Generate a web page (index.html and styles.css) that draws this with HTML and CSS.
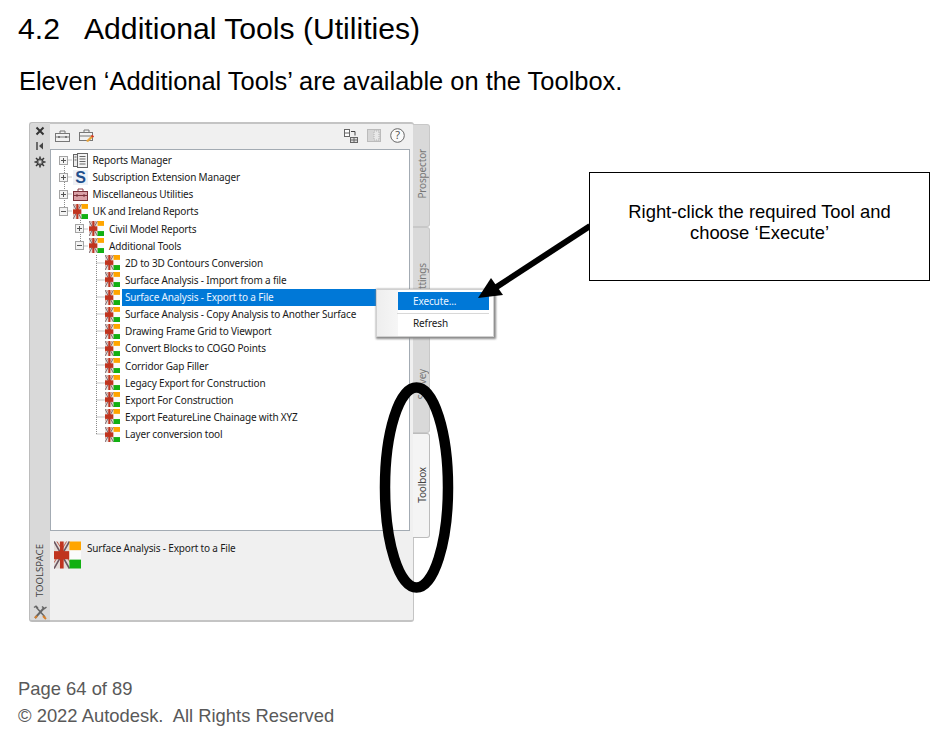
FILE: index.html
```html
<!DOCTYPE html>
<html lang="en">
<head>
<meta charset="utf-8">
<title>Additional Tools (Utilities)</title>
<link rel="stylesheet" href="styles.css">
</head>
<body>
<svg class="defs" width="0" height="0" aria-hidden="true">
  <symbol id="flag" viewBox="0 0 14 14">
    <rect width="8" height="14" fill="#e4dcd8"/>
    <path d="M0 0l8 14M8 0L0 14" stroke="#6a5560" stroke-width=".8"/>
    <path d="M1.500 0l7 11M6.500 0L0 11" stroke="#c0584a" stroke-width=".5"/>
    <rect y="5" width="8" height="4.200" fill="#c0341f"/>
    <rect x="3.100" width="1.900" height="14" fill="#c0341f"/>
    <rect x="8" width="6" height="4.600" fill="#ffa500"/>
    <rect x="8" y="4.600" width="6" height="4.800" fill="#fbfbfb"/>
    <rect x="8" y="9.400" width="6" height="4.600" fill="#12b012"/>
  </symbol>
  <symbol id="plus" viewBox="0 0 9 9">
    <rect x=".5" y=".5" width="8" height="8" fill="#f4f4f4" stroke="#a4a4a4"/>
    <path d="M2 4.500h5M4.500 2v5" stroke="#555"/>
  </symbol>
  <symbol id="minus" viewBox="0 0 9 9">
    <rect x=".5" y=".5" width="8" height="8" fill="#f4f4f4" stroke="#a4a4a4"/>
    <path d="M2 4.500h5" stroke="#555"/>
  </symbol>
</svg>

<main class="page">
  <h1 class="title"><span class="num">4.2</span>Additional Tools (Utilities)</h1>
  <p class="lead">Eleven ‘Additional Tools’ are available on the Toolbox.</p>

  <figure class="figure">
    <div class="panel">
      <div class="strip">
        <svg class="strip-icon" width="10" height="10" viewBox="0 0 10 10"><path d="M1.500 1.500l7 7M8.500 1.500l-7 7" stroke="#333" stroke-width="2"/></svg>
        <svg class="strip-icon" width="10" height="10" viewBox="0 0 10 10"><path d="M2 1v8" stroke="#444" stroke-width="1.500"/><path d="M4 5l4-3.500v7z" fill="#444"/></svg>
        <svg class="strip-icon" width="12" height="12" viewBox="0 0 12 12"><path d="M6 .5v11M.5 6h11M2 2l8 8M10 2l-8 8" stroke="#333" stroke-width="1.500"/><circle cx="6" cy="6" r="3.200" fill="#777" stroke="#333"/><circle cx="6" cy="6" r="1.400" fill="#d9d9d9"/></svg>
        <span class="toolspace">TOOLSPACE</span>
        <svg class="strip-tools" width="15" height="15" viewBox="0 0 15 15"><path d="M2 13L11 3" stroke="#666" stroke-width="2"/><path d="M9 1.500l2.500 2 2-1.500" fill="none" stroke="#666" stroke-width="1.500"/><path d="M3 2l9 10" stroke="#666" stroke-width="1.500"/><path d="M1 2.500L3 1l2 2" fill="none" stroke="#666" stroke-width="1.300"/><path d="M10 11l3 3" stroke="#d8802a" stroke-width="2"/><path d="M2 13l2-2" stroke="#d8802a" stroke-width="2"/></svg>
      </div>

      <div class="main">
        <div class="toolbar">
          <svg class="tool" width="15" height="14" viewBox="0 0 15 14"><path d="M5 4V2h5v2" fill="none" stroke="#777"/><rect x=".5" y="4.500" width="14" height="8" fill="#f2f2f2" stroke="#777"/><path d="M.5 8h14" stroke="#777"/><rect x="3" y="7" width="2" height="2" fill="#777"/><rect x="10" y="7" width="2" height="2" fill="#777"/></svg>
          <svg class="tool" width="15" height="15" viewBox="0 0 15 15"><path d="M5 4V2h5v2" fill="none" stroke="#777"/><rect x=".5" y="4.500" width="13" height="8" fill="#f2f2f2" stroke="#777"/><path d="M.5 8h13" stroke="#777"/><path d="M7 13l6-6 2 1.500-6 5.500z" fill="#e8a33a"/><path d="M12.500 7.500l2 1.500" stroke="#d0342c" stroke-width="2"/></svg>
          <span class="tool-gap"></span>
          <svg class="tool" width="14" height="14" viewBox="0 0 14 14"><rect x=".5" y=".5" width="5" height="7" fill="#fff" stroke="#666"/><path d="M.5 4h5" stroke="#666"/><rect x="6.500" y="8.500" width="7" height="5" fill="#ddd" stroke="#666"/><path d="M10 8.500v5M6.500 11h7" stroke="#666"/><path d="M7 2.500h4v4" fill="none" stroke="#444"/></svg>
          <svg class="tool" width="14" height="14" viewBox="0 0 14 14"><rect x=".5" y=".5" width="13" height="12" fill="#d6d6d6" stroke="#bbb"/><rect x="7" y="2" width="5" height="9" fill="#e8e8e8" stroke="#b4b4b4" stroke-dasharray="1 1"/></svg>
          <svg class="tool" width="15" height="15" viewBox="0 0 15 15"><circle cx="7.500" cy="7.500" r="6.800" fill="#fafafa" stroke="#666"/><text class="help" x="7.500" y="11.300" text-anchor="middle">?</text></svg>
        </div>

        <div class="tree">
          <svg class="tree-lines" width="120" height="300" viewBox="0 0 120 300" aria-hidden="true">
            <path d="M13.500 10v52M13.500 10h8M13.500 27h8M13.500 44h8M13.500 61h8M29.500 62v34M29.500 79h8M29.500 96h8M45.500 105v180M45.500 113h9M45.500 130h9M45.500 147h9M45.500 164h9M45.500 181h9M45.500 198h9M45.500 215h9M45.500 233h9M45.500 250h9M45.500 267h9M45.500 284h9" fill="none" stroke="#8a8a8a" stroke-dasharray="1 1"/>
          </svg>
          <div class="row l0"><svg class="exp"><use href="#plus"/></svg><svg class="ico" viewBox="0 0 15 15"><rect x=".5" y="1.500" width="4" height="12" fill="#ececec" stroke="#666"/><rect x="4.500" y=".5" width="10" height="14" fill="#f4f4f4" stroke="#666"/><path d="M6.500 3.500h6M6.500 6h6M6.500 8.500h6M6.500 11h6M1.500 4h2M1.500 7h2" stroke="#666"/></svg><span class="label">Reports Manager</span></div>
          <div class="row l0"><svg class="exp"><use href="#plus"/></svg><span class="ico s-ico">S</span><span class="label">Subscription Extension Manager</span></div>
          <div class="row l0"><svg class="exp"><use href="#plus"/></svg><svg class="ico" viewBox="0 0 15 15"><path d="M5 4V2h5v2" fill="none" stroke="#8a3a44"/><rect x=".5" y="4.500" width="14" height="9" fill="#d9a0a6" stroke="#7a3038"/><path d="M.5 8.500h14" stroke="#7a3038"/><rect x="3" y="7.500" width="2" height="2" fill="#7a3038"/><rect x="10" y="7.500" width="2" height="2" fill="#7a3038"/></svg><span class="label">Miscellaneous Utilities</span></div>
          <div class="row l0"><svg class="exp"><use href="#minus"/></svg><svg class="ico"><use href="#flag"/></svg><span class="label">UK and Ireland Reports</span></div>
          <div class="row l1"><svg class="exp"><use href="#plus"/></svg><svg class="ico"><use href="#flag"/></svg><span class="label">Civil Model Reports</span></div>
          <div class="row l1"><svg class="exp"><use href="#minus"/></svg><svg class="ico"><use href="#flag"/></svg><span class="label">Additional Tools</span></div>
          <div class="row l2"><svg class="ico"><use href="#flag"/></svg><span class="label">2D to 3D Contours Conversion</span></div>
          <div class="row l2"><svg class="ico"><use href="#flag"/></svg><span class="label">Surface Analysis - Import from a file</span></div>
          <div class="row l2"><svg class="ico"><use href="#flag"/></svg><span class="label selected">Surface Analysis - Export to a File</span></div>
          <div class="row l2"><svg class="ico"><use href="#flag"/></svg><span class="label">Surface Analysis - Copy Analysis to Another Surface</span></div>
          <div class="row l2"><svg class="ico"><use href="#flag"/></svg><span class="label">Drawing Frame Grid to Viewport</span></div>
          <div class="row l2"><svg class="ico"><use href="#flag"/></svg><span class="label">Convert Blocks to COGO Points</span></div>
          <div class="row l2"><svg class="ico"><use href="#flag"/></svg><span class="label">Corridor Gap Filler</span></div>
          <div class="row l2"><svg class="ico"><use href="#flag"/></svg><span class="label">Legacy Export for Construction</span></div>
          <div class="row l2"><svg class="ico"><use href="#flag"/></svg><span class="label">Export For Construction</span></div>
          <div class="row l2"><svg class="ico"><use href="#flag"/></svg><span class="label">Export FeatureLine Chainage with XYZ</span></div>
          <div class="row l2"><svg class="ico"><use href="#flag"/></svg><span class="label">Layer conversion tool</span></div>
        </div>

        <div class="preview">
          <svg class="preview-ico"><use href="#flag"/></svg>
          <span class="preview-text">Surface Analysis - Export to a File</span>
        </div>
      </div>

      <div class="tabs">
        <div class="tab t-prospector"><span>Prospector</span></div>
        <div class="tab t-settings"><span>Settings</span></div>
        <div class="tab t-survey"><span>Survey</span></div>
        <div class="tab t-toolbox active"><span>Toolbox</span></div>
      </div>
    </div>

    <div class="menu">
      <div class="menu-item hot">Execute...</div>
      <div class="menu-sep"></div>
      <div class="menu-item">Refresh</div>
    </div>

    <svg class="ellipse" width="76" height="212" viewBox="0 0 76 212" aria-hidden="true">
      <ellipse cx="37.500" cy="105.500" rx="31.500" ry="100" fill="none" stroke="#000" stroke-width="10.500"/>
    </svg>

    <svg class="arrow" width="120" height="80" viewBox="0 0 120 80" aria-hidden="true">
      <path d="M117 3L22 65" stroke="#000" stroke-width="6"/>
      <path d="M5 75L18 55 30 72z" fill="#000"/>
    </svg>

    <div class="callout">Right-click the required Tool and<br>choose ‘Execute’</div>
  </figure>

  <footer class="footer">
    <div>Page 64 of 89</div>
    <div>© 2022 Autodesk.&nbsp; All Rights Reserved</div>
  </footer>
</main>
</body>
</html>
```

FILE: styles.css
```css
html, body {
  margin: 0;
  padding: 0;
  background: #fff;
}

body {
  font-family: "Liberation Sans", Arial, sans-serif;
  color: #000;
  overflow: hidden;
}

.defs {
  position: absolute;
}

.page {
  width: 939px;
  height: 736px;
}

.title {
  margin: 0;
  padding: 12px 0 0 18px;
  font-size: 30.150px;
  line-height: 34px;
  font-weight: 400;
}

.num {
  display: inline-block;
  width: 66px;
}

.lead {
  margin: 20px 0 0 19px;
  font-size: 25.450px;
  line-height: 30px;
}

.figure {
  position: relative;
  margin: 26px 0 0 29px;
  width: 901px;
  height: 500px;
}

/* toolspace palette */
.panel {
  display: flex;
  width: 401px;
  height: 500px;
  font-family: "Noto Sans", sans-serif;
  font-size: 10px;
  letter-spacing: -0.16px;
  color: #1a1a1a;
}

.strip {
  display: flex;
  flex-direction: column;
  align-items: center;
  flex: none;
  width: 21px;
  box-sizing: border-box;
  padding-top: 3px;
  background: #d9d9d9;
  border: 1px solid #bcbcbc;
  border-right: 0;
  border-bottom-width: 2px;
  border-radius: 3px 0 0 3px;
}

.strip-icon {
  margin-bottom: 5px;
}

.toolspace {
  margin-top: auto;
  writing-mode: vertical-rl;
  transform: rotate(180deg);
  font-size: 9.600px;
  letter-spacing: 0;
  line-height: 12px;
  color: #444;
}

.strip-tools {
  margin: 8px 0 0;
}

.main {
  display: flex;
  flex-direction: column;
  flex: none;
  width: 364px;
  box-sizing: border-box;
  padding-right: 3px;
  background: #f0f0f0;
  border-top: 2px solid #c4c4c4;
  border-right: 1px solid #c4c4c4;
  border-bottom: 2px solid #c4c4c4;
  border-radius: 0 3px 3px 0;
}

.toolbar {
  display: flex;
  align-items: center;
  flex: none;
  height: 25px;
  box-sizing: border-box;
  padding: 0 5px 2px 5px;
  gap: 9px;
}

.tool-gap {
  flex: 1;
}

.help {
  font-size: 11px;
  fill: #555;
  font-family: "Noto Sans", sans-serif;
}

.tree {
  position: relative;
  flex: none;
  height: 382px;
  box-sizing: border-box;
  padding-top: 1.500px;
  background: #fff;
  border: 1px solid #a3abb3;
}

.tree-lines {
  position: absolute;
  left: 0;
  top: 0;
}

.row {
  position: relative;
  display: flex;
  align-items: center;
  height: 17.130px;
  white-space: nowrap;
}

.l0 { padding-left: 8px; }
.l1 { padding-left: 24px; }
.l2 { padding-left: 54px; }

.exp {
  flex: none;
  width: 9px;
  height: 9px;
  margin-right: 5px;
}

.ico {
  flex: none;
  width: 15px;
  height: 15px;
}

.s-ico {
  font-family: "Liberation Sans", sans-serif;
  font-size: 16px;
  font-weight: 700;
  line-height: 15px;
  text-align: center;
  color: #1f4e8c;
  background: #eef1f6;
}

.label {
  flex: 1;
  align-self: stretch;
  display: flex;
  align-items: center;
  margin-left: 2px;
  padding-left: 3px;
}

.l0 .label {
  padding-left: 2.500px;
}

.selected {
  background: #0078d7;
  color: #eaf4ff;
}

.preview {
  display: flex;
  align-items: flex-start;
  flex: 1;
  padding: 10px 0 0 4px;
}

.preview-ico {
  flex: none;
  width: 27px;
  height: 28px;
}

.preview-text {
  margin-left: 6px;
  line-height: 14px;
}

/* side tabs */
.tabs {
  display: flex;
  flex-direction: column;
  flex: none;
  width: 17px;
  margin-left: -1px;
  padding-top: 2px;
}

.tab {
  display: flex;
  align-items: center;
  justify-content: center;
  box-sizing: border-box;
  padding-left: 1px;
  background: #d9d9d9;
  border: 1px solid #c8c8c8;
  border-left: 0;
  border-radius: 0 3px 3px 0;
  color: #777;
}

.tab span {
  writing-mode: vertical-rl;
  transform: rotate(180deg);
  line-height: 14px;
}

.t-prospector { height: 103px; padding-bottom: 3px; }
.t-settings { height: 108px; }
.t-survey { height: 98px; }
.t-toolbox { height: 105px; padding-bottom: 2px; }

.tab.active {
  background: #f4f4f4;
  border-color: #bcbcbc;
  color: #444;
}

/* items lying over the palette */
.menu {
  position: absolute;
  left: 347px;
  top: 167px;
  width: 118px;
  height: 48px;
  box-sizing: border-box;
  padding: 2px 4px 0 21px;
  background: linear-gradient(90deg, #eeeeee 0, #f6f6f6 21px, #fff 21px);
  border: 1px solid #d0d0d0;
  box-shadow: 1px 1px 2px 1px #8a8a8a;
  font-family: "Noto Sans", sans-serif;
  font-size: 10px;
  letter-spacing: -0.12px;
  color: #1a1a1a;
}

.menu-item {
  height: 18px;
  line-height: 18px;
  padding-left: 15px;
}

.menu-item.hot {
  background: #0078d7;
  color: #eaf4ff;
}

.menu-sep {
  height: 1px;
  margin: 3px 0 0 -1px;
  background: #d8d8d8;
}

.ellipse {
  position: absolute;
  left: 350px;
  top: 260px;
}

.arrow {
  position: absolute;
  left: 444px;
  top: 101px;
}

.callout {
  position: absolute;
  left: 560px;
  top: 50px;
  width: 341px;
  height: 109px;
  box-sizing: border-box;
  padding-top: 28px;
  border: 1px solid #000;
  background: #fff;
  text-align: center;
  font-size: 18.400px;
  line-height: 21px;
}

.footer {
  margin: 53px 0 0 18px;
  font-size: 18.400px;
  line-height: 27px;
  color: #595959;
}
```
